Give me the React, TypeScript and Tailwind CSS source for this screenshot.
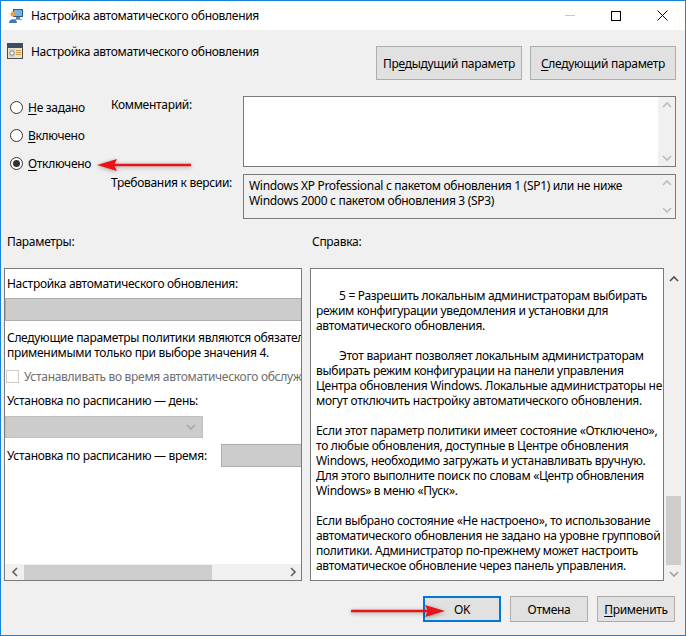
import React from "react";

const FONT = "font-['Segoe_UI','Noto_Sans','Open_Sans',sans-serif]";

function AppIcon() {
  return (
    <svg width="16" height="16" viewBox="0 0 16 16">
      <rect x="5" y="1" width="10" height="8" fill="#2b5a8c" />
      <rect x="6" y="2" width="8" height="6" fill="#6fb3e6" />
      <rect x="8" y="9" width="4" height="2" fill="#7a7a7a" />
      <rect x="6" y="11" width="8" height="1" fill="#9a9a9a" />
      <circle cx="5" cy="6" r="2.5" fill="#e6a24a" />
      <path d="M1 15 C1 10 9 10 9 15 Z" fill="#3a78c2" />
    </svg>
  );
}

function PolicyIcon() {
  return (
    <svg width="16" height="16" viewBox="0 0 16 16">
      <rect x="0.5" y="0.5" width="15" height="15" fill="#e9e3cf" stroke="#4a4a4a" />
      <rect x="1" y="1" width="14" height="4" fill="#3b4c63" />
      <rect x="2" y="6" width="6" height="8" fill="#cfcfcf" />
      <circle cx="5" cy="10" r="2.2" fill="#f5f5f5" stroke="#8a8a8a" />
      <rect x="9" y="7" width="5" height="1" fill="#d0a040" />
      <rect x="9" y="9" width="5" height="1" fill="#d0a040" />
      <rect x="9" y="11" width="5" height="1" fill="#d0a040" />
    </svg>
  );
}

function Btn({ children, className = "" }: { children: React.ReactNode; className?: string }) {
  return (
    <div
      className={`flex items-center justify-center bg-[#e1e1e1] border border-[#adadad] ${className}`}
    >
      {children}
    </div>
  );
}

function Radio({ checked, label, accel }: { checked?: boolean; label: string; accel: string }) {
  return (
    <div className="flex items-center gap-[5px] h-[16px]">
      <span className="w-[13px] h-[13px] rounded-full border border-[#333] bg-white flex items-center justify-center">
        {checked && <span className="w-[7px] h-[7px] rounded-full bg-[#333]" />}
      </span>
      <span>
        <span className="underline underline-offset-2">{accel}</span>
        {label}
      </span>
    </div>
  );
}

function Chevron({ dir, color = "#a0a0a0" }: { dir: "up" | "down" | "left" | "right"; color?: string }) {
  const d = {
    up: "M1 6 L5 2 L9 6",
    down: "M1 2 L5 6 L9 2",
    left: "M6 1 L2 5 L6 9",
    right: "M2 1 L6 5 L2 9",
  }[dir];
  const vert = dir === "up" || dir === "down";
  return (
    <svg width={vert ? 10 : 8} height={vert ? 8 : 10} viewBox={vert ? "0 0 10 8" : "0 0 8 10"}>
      <path d={d} fill="none" stroke={color} strokeWidth="1.6" />
    </svg>
  );
}

function VScroll({ className = "" }: { className?: string }) {
  return (
    <div className={`w-[17px] bg-[#f0f0f0] flex flex-col items-center justify-between py-[4px] ${className}`}>
      <Chevron dir="up" color="#bcbcbc" />
      <Chevron dir="down" color="#bcbcbc" />
    </div>
  );
}

function RedArrow({ dir, className }: { dir: "left" | "right"; className: string }) {
  return (
    <svg
      className={className}
      width="100"
      height="20"
      viewBox="0 0 100 20"
      style={{ filter: "drop-shadow(0 1px 2px rgba(0,0,0,0.35))" }}
    >
      {dir === "left" ? (
        <>
          <line x1="18" y1="10" x2="96" y2="10" stroke="#e8141a" strokeWidth="2.5" />
          <path d="M2 10 L22 4 L19 10 L22 16 Z" fill="#e8141a" />
        </>
      ) : (
        <>
          <line x1="4" y1="10" x2="82" y2="10" stroke="#e8141a" strokeWidth="2.5" />
          <path d="M98 10 L78 4 L81 10 L78 16 Z" fill="#e8141a" />
        </>
      )}
    </svg>
  );
}

const helpLines: { t: string; indent?: boolean; gap?: boolean }[] = [
  { t: "5 = Разрешить локальным администраторам выбирать", indent: true },
  { t: "режим конфигурации уведомления и установки для" },
  { t: "автоматического обновления." },
  { t: "Этот вариант позволяет локальным администраторам", indent: true, gap: true },
  { t: "выбирать режим конфигурации на панели управления" },
  { t: "Центра обновления Windows. Локальные администраторы не" },
  { t: "могут отключить настройку автоматического обновления." },
  { t: "Если этот параметр политики имеет состояние «Отключено»,", gap: true },
  { t: "то любые обновления, доступные в Центре обновления" },
  { t: "Windows, необходимо загружать и устанавливать вручную." },
  { t: "Для этого выполните поиск по словам «Центр обновления" },
  { t: "Windows» в меню «Пуск»." },
  { t: "Если выбрано состояние «Не настроено», то использование", gap: true },
  { t: "автоматического обновления не задано на уровне групповой" },
  { t: "политики. Администратор по-прежнему может настроить" },
  { t: "автоматическое обновление через панель управления." },
];

export default function App() {
  return (
    <div
      className={`relative w-[686px] h-[636px] border border-[#1883d7] bg-[#f0f0f0] text-[12px] leading-[15px] tracking-[-0.3px] text-black overflow-hidden ${FONT}`}
    >
      {/* title bar */}
      <div className="h-[29px] bg-white flex items-center">
        <div className="pl-[7px] pr-[7px]">
          <AppIcon />
        </div>
        <span className="flex-1">Настройка автоматического обновления</span>
        <div className="flex items-center h-full">
          <div className="w-[46px] flex justify-center">
            <span className="w-[10px] h-px bg-[#c8c8c8]" />
          </div>
          <div className="w-[46px] flex justify-center">
            <span className="w-[10px] h-[10px] border border-black" />
          </div>
          <div className="w-[46px] flex justify-center">
            <svg width="11" height="11" viewBox="0 0 11 11">
              <path d="M0.5 0.5 L10.5 10.5 M10.5 0.5 L0.5 10.5" stroke="#000" strokeWidth="1" />
            </svg>
          </div>
        </div>
      </div>

      {/* header row */}
      <div className="flex items-start h-[66px]">
        <div className="flex items-center pl-[6px] pt-[13px]">
          <PolicyIcon />
          <span className="ml-[8px]">Настройка автоматического обновления</span>
        </div>
        <div className="ml-auto flex gap-[8px] pt-[16px] pr-[9px]">
          <Btn className="w-[146px] h-[34px]">
            <span>
              Пр<span className="underline underline-offset-2">е</span>дыдущий параметр
            </span>
          </Btn>
          <Btn className="w-[146px] h-[34px]">
            <span>
              <span className="underline underline-offset-2">С</span>ледующий параметр
            </span>
          </Btn>
        </div>
      </div>

      {/* state + comment + version */}
      <div className="flex">
        <div className="w-[110px] pl-[9px] pt-[3px] flex flex-col gap-[12px]">
          <Radio accel="Н" label="е задано" />
          <Radio accel="В" label="ключено" />
          <Radio checked accel="О" label="тключено" />
        </div>
        <div className="flex flex-col gap-[7px]">
          <div className="flex">
            <div className="w-[132px] pt-[1px]">Комментарий:</div>
            <div className="w-[433px] h-[71px] bg-white border border-[#7a7a7a] flex justify-end">
              <VScroll />
            </div>
          </div>
          <div className="flex">
            <div className="w-[132px] pt-[1px]">Требования к версии:</div>
            <div className="w-[433px] h-[45px] bg-[#f0f0f0] border border-[#7a7a7a] flex">
              <div className="flex-1 pl-[5px] pt-[3px]">
                <div>Windows XP Professional с пакетом обновления 1 (SP1) или не ниже</div>
                <div>Windows 2000 с пакетом обновления 3 (SP3)</div>
              </div>
              <VScroll />
            </div>
          </div>
        </div>
      </div>

      {/* section labels */}
      <div className="flex pt-[15px] h-[49px]">
        <div className="w-[310px] pl-[6px]">Параметры:</div>
        <div className="pl-[1px]">Справка:</div>
      </div>

      {/* panels */}
      <div className="flex pl-[3px] h-[313px]">
        <div className="w-[298px] h-full bg-white border border-[#7a7a7a] flex flex-col overflow-hidden">
          <div className="flex-1 overflow-hidden">
            <div className="w-[420px]">
              <div className="pl-[2px] pt-[7px] h-[29px]">Настройка автоматического обновления:</div>
              <div className="h-[23px] bg-[#cccccc] border border-[#adadad]" />
              <div className="pl-[2px] pt-[9px] whitespace-nowrap">
                Следующие параметры политики являются обязательными и
              </div>
              <div className="pl-[2px] whitespace-nowrap">применимыми только при выборе значения 4.</div>
              <div className="flex items-center gap-[5px] pl-[1px] pt-[9px]">
                <span className="w-[13px] h-[13px] border border-[#cccccc] bg-white" />
                <span className="text-[#6d6d6d] whitespace-nowrap">
                  Устанавливать во время автоматического обслуживания
                </span>
              </div>
              <div className="pl-[2px] pt-[9px]">Установка по расписанию — день:</div>
              <div className="mt-[8px] w-[198px] h-[22px] bg-[#cccccc] border border-[#bfbfbf] flex items-center justify-end pr-[6px]">
                <Chevron dir="down" color="#a8a8a8" />
              </div>
              <div className="flex items-center mt-[6px]">
                <span className="pl-[2px] w-[216px]">Установка по расписанию — время:</span>
                <span className="w-[90px] h-[23px] bg-[#cccccc] border border-[#adadad]" />
              </div>
            </div>
          </div>
          <div className="h-[16px] bg-[#f0f0f0] flex items-center">
            <div className="w-[19px] flex justify-center">
              <Chevron dir="left" color="#606060" />
            </div>
            <div className="w-[188px] h-[15px] bg-[#cdcdcd]" />
            <div className="flex-1" />
            <div className="w-[17px] flex justify-center">
              <Chevron dir="right" color="#606060" />
            </div>
          </div>
        </div>
        <div className="ml-[8px] w-[354px] h-full bg-white border border-[#7a7a7a] pl-[5px] pt-[19px]">
          {helpLines.map((l, i) => (
            <div key={i} className={`whitespace-nowrap ${l.gap ? "mt-[15px]" : ""} ${l.indent ? "pl-[23px]" : ""}`}>
              {l.t}
            </div>
          ))}
        </div>
        <div className="w-[17px] ml-[1px] flex flex-col items-center">
          <div className="pt-[7px] h-[20px]">
            <Chevron dir="up" color="#505050" />
          </div>
          <div className="mt-[208px] w-[15px] h-[69px] bg-[#cdcdcd]" />
          <div className="pt-[5px]">
            <Chevron dir="down" color="#a0a0a0" />
          </div>
        </div>
      </div>

      {/* bottom buttons */}
      <div className="flex justify-end gap-[9px] pr-[10px] pt-[15px]">
        <div className="w-[78px] h-[26px] flex items-center justify-center bg-[#e1e1e1] border-2 border-[#0078d7]">
          OK
        </div>
        <Btn className="w-[78px] h-[26px]">Отмена</Btn>
        <Btn className="w-[78px] h-[26px]">
          <span>
            <span className="underline underline-offset-2">П</span>рименить
          </span>
        </Btn>
      </div>

      {/* annotations */}
      <RedArrow dir="left" className="absolute left-[94px] top-[154px]" />
      <RedArrow dir="right" className="absolute left-[346px] top-[600px]" />
    </div>
  );
}
